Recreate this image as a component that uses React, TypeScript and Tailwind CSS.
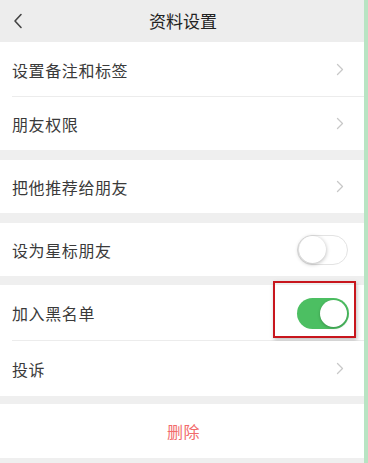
import React from 'react';

const font = { fontFamily: '"Noto Sans CJK SC", "Noto Sans", sans-serif' };

const Chevron: React.FC = () => (
  <svg width="8" height="13" viewBox="0 0 8 13" fill="none">
    <path d="M1.5 1.5L6.5 6.5L1.5 11.5" stroke="#c8c8c8" strokeWidth="1.3" strokeLinecap="round" strokeLinejoin="round" />
  </svg>
);

const Toggle: React.FC<{ on?: boolean }> = ({ on = false }) =>
  on ? (
    <div className="w-[52px] h-[31px] rounded-full bg-[#4cbf62] flex items-center justify-end pr-[2px]">
      <div className="w-[27px] h-[27px] rounded-full bg-white shadow-[0_1px_3px_rgba(0,0,0,0.25)]" />
    </div>
  ) : (
    <div className="w-[51px] h-[30px] rounded-full bg-white border border-[#e3e3e3] flex items-center pl-[1px]">
      <div className="w-[27px] h-[27px] rounded-full bg-white shadow-[0_1px_4px_rgba(0,0,0,0.3)]" />
    </div>
  );

const Row: React.FC<{ label: string; h: string; divider?: boolean; right?: React.ReactNode }> = ({
  label,
  h,
  divider,
  right = <Chevron />,
}) => (
  <div className={`relative bg-white flex items-center justify-between pl-3 pr-[20px] ${h}`}>
    <span className="text-[16px] tracking-[0.6px] text-[#3a3a3a]">{label}</span>
    {right}
    {divider && <div className="absolute left-3 right-0 bottom-0 h-px bg-[#ececec]" />}
  </div>
);

export default function App() {
  return (
    <div className="w-[368px] h-[463px] flex overflow-hidden" style={font}>
      <div className="w-[364px] bg-[#efefef] flex flex-col">
        <div className="h-[42px] relative flex items-center justify-center bg-[#ededed]">
          <svg className="absolute left-[12px] top-[13px]" width="12" height="16" viewBox="0 0 12 16" fill="none">
            <path d="M9 1.5L3 8L9 14.5" stroke="#444" strokeWidth="1.6" strokeLinecap="round" strokeLinejoin="round" />
          </svg>
          <span className="text-[17px] text-[#222] ml-[2px]">资料设置</span>
        </div>

        <Row label="设置备注和标签" h="h-[55px]" divider />
        <Row label="朋友权限" h="h-[53px]" />

        <div className="h-[10px]" />
        <Row label="把他推荐给朋友" h="h-[53px]" />

        <div className="h-[10px]" />
        <Row label="设为星标朋友" h="h-[53px]" right={<div className="-mr-[4px]"><Toggle /></div>} />

        <div className="h-[9px]" />
        <div className="relative">
          <Row label="加入黑名单" h="h-[56px]" divider right={<div className="-mr-[5px]"><Toggle on /></div>} />
          <div className="absolute left-[273px] top-[-4px] w-[83px] h-[57px] border-2 border-[#c8161d] shadow-[1px_2px_4px_rgba(0,0,0,0.25)]" />
        </div>
        <Row label="投诉" h="h-[55px]" />

        <div className="h-[8px]" />
        <div className="h-[54px] bg-white flex items-center justify-center">
          <span className="text-[16px] tracking-[0.6px] text-[#f26b6b] ml-[3px]">删除</span>
        </div>
      </div>
      <div className="w-[4px] bg-[#b8e4c3]" />
    </div>
  );
}
